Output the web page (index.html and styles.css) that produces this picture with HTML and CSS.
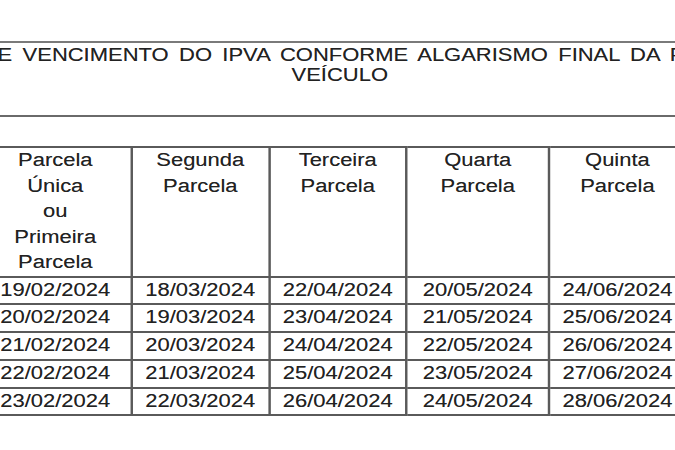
FILE: index.html
```html
<!DOCTYPE html>
<html lang="pt-BR">
<head>
<meta charset="utf-8">
<title>Datas de vencimento do IPVA</title>
<link rel="stylesheet" href="styles.css">
</head>
<body>
<main class="page">
  <header class="title">
    <div class="title-line first">E VENCIMENTO DO IPVA CONFORME ALGARISMO FINAL DA P</div>
    <div class="title-line">VEÍCULO</div>
  </header>
  <table class="dates">
    <colgroup>
      <col class="c1"><col class="c2"><col class="c3"><col class="c4"><col class="c5">
    </colgroup>
    <thead>
      <tr>
        <th>Parcela<br>Única<br>ou<br>Primeira<br>Parcela</th>
        <th>Segunda<br>Parcela</th>
        <th>Terceira<br>Parcela</th>
        <th>Quarta<br>Parcela</th>
        <th>Quinta<br>Parcela</th>
      </tr>
    </thead>
    <tbody>
      <tr><td>19/02/2024</td><td>18/03/2024</td><td>22/04/2024</td><td>20/05/2024</td><td>24/06/2024</td></tr>
      <tr><td>20/02/2024</td><td>19/03/2024</td><td>23/04/2024</td><td>21/05/2024</td><td>25/06/2024</td></tr>
      <tr><td>21/02/2024</td><td>20/03/2024</td><td>24/04/2024</td><td>22/05/2024</td><td>26/06/2024</td></tr>
      <tr><td>22/02/2024</td><td>21/03/2024</td><td>25/04/2024</td><td>23/05/2024</td><td>27/06/2024</td></tr>
      <tr><td>23/02/2024</td><td>22/03/2024</td><td>26/04/2024</td><td>24/05/2024</td><td>28/06/2024</td></tr>
    </tbody>
  </table>
</main>
</body>
</html>
```

FILE: styles.css
```css
html, body {
  margin: 0;
  padding: 0;
  background: #ffffff;
  overflow: hidden;
}

/* The scanned document is stretched horizontally by about 22% */
.page {
  width: 557px;
  transform: scaleX(1.22);
  transform-origin: 0 0;
  font-family: "Liberation Sans", Arial, sans-serif;
  font-size: 18px;
  color: #222222;
  text-shadow: 0 0 0.5px rgba(0, 0, 0, 0.45);
}

.title {
  margin-top: 41px;
  border-top: 2px solid #7a7a7a;
  border-bottom: 2px solid #6a6a6a;
  padding: 2px 0 30px;
}

.title-line {
  line-height: 20px;
  text-align: center;
  white-space: nowrap;
}

.title-line.first {
  margin-left: -2px;
  margin-right: -4px;
  text-align: justify;
  text-align-last: justify;
}

.dates {
  margin-top: 29px;
  margin-left: -18px;
  border-collapse: collapse;
  table-layout: fixed;
  width: 579px;
}

.c1 { width: 124.6px; }
.c2 { width: 113.1px; }
.c3 { width: 112.3px; }
.c4 { width: 117.2px; }
.c5 { width: 111.8px; }

.dates th,
.dates td {
  border: 2px solid #5a5a5a;
  padding: 0;
  text-align: center;
  font-weight: normal;
  line-height: 25.8px;
}

.dates th {
  vertical-align: top;
  line-height: 25.5px;
}
```
